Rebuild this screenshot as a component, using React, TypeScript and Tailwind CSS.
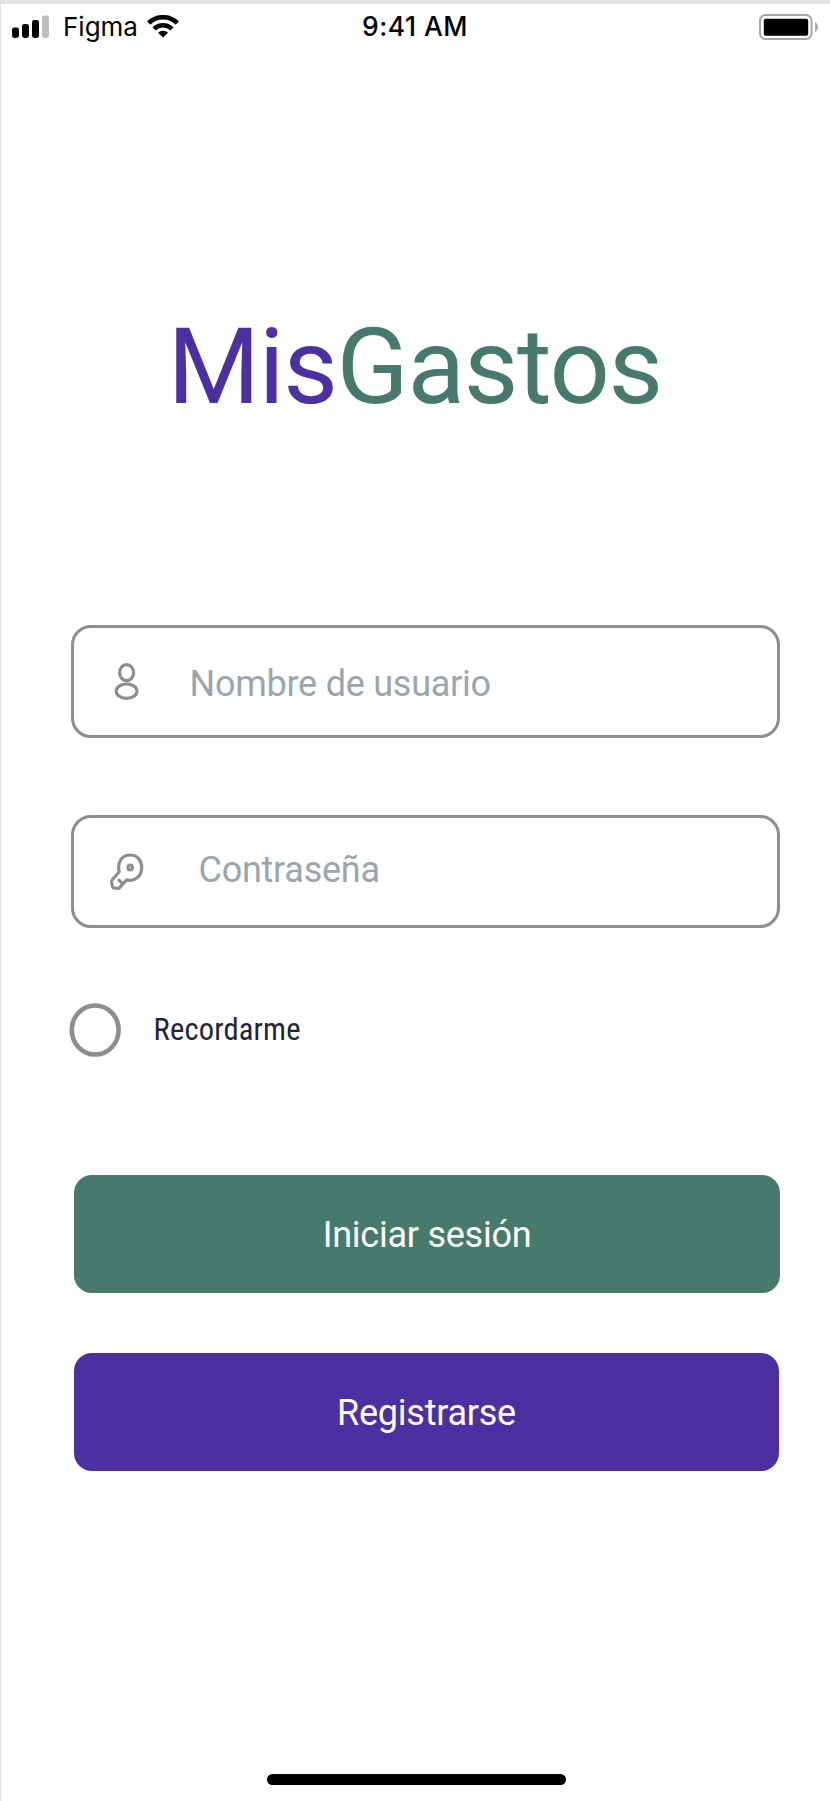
import type { ReactNode } from "react";

function SignalIcon() {
  return (
    <svg width="38" height="24" viewBox="0 0 38 24" className="shrink-0">
      <rect x="0" y="12.5" width="7" height="10.5" rx="2.4" fill="#000" />
      <rect x="10" y="9" width="7" height="14" rx="2.4" fill="#000" />
      <rect x="20" y="5" width="7" height="18" rx="2.4" fill="#000" />
      <rect x="30" y="0.5" width="7" height="22.5" rx="2.4" fill="#bfbfbf" />
    </svg>
  );
}

function WifiIcon() {
  return (
    <svg width="32" height="23" viewBox="0 0 32 23" className="shrink-0">
      <g fill="none" stroke="#000" strokeWidth="4.6">
        <path d="M1.7 8 A20.6 20.6 0 0 1 30.3 8" />
        <path d="M7 13.9 A13 13 0 0 1 25 13.9" />
      </g>
      <path d="M16 22.6 L11 17.8 A7 7 0 0 1 21 17.8 Z" fill="#000" />
    </svg>
  );
}

function BatteryIcon() {
  return (
    <svg width="60" height="26" viewBox="0 0 60 26" className="shrink-0">
      <rect x="1" y="1" width="51.5" height="24" rx="5.5" fill="none" stroke="#a6a6a6" strokeWidth="2" />
      <rect x="4.8" y="4.8" width="44.4" height="17" rx="2" fill="#000" />
      <path d="M56 8 C60 10 60 16 56 18 Z" fill="#a6a6a6" />
    </svg>
  );
}

function UserIcon() {
  return (
    <svg width="26" height="38" viewBox="0 0 26 38" fill="none" stroke="#8e8e8e" strokeWidth="3.2">
      <ellipse cx="12.6" cy="9.7" rx="7" ry="8" />
      <ellipse cx="12.6" cy="28.2" rx="10.4" ry="7.2" />
    </svg>
  );
}

function KeyIcon() {
  return (
    <svg
      width="34"
      height="38"
      viewBox="0 0 34 38"
      fill="none"
      stroke="#8e8e8e"
      strokeWidth="3.2"
      strokeLinecap="round"
      strokeLinejoin="round"
    >
      <path d="M9.2 18.7 C7 9 12 2 20.4 2 C27 2 31.7 7.5 31.7 14.5 C31.7 23.5 24.5 28.9 16.6 26.9 L9.6 34.6 C9 35.3 8.3 35.5 7.5 35.4 L4.1 35 C3.1 34.9 2.5 34.2 2.4 33.2 L1.6 29.2 C1.5 28.3 1.7 27.4 2.3 26.7 Z" />
      <path d="M9 27.2 L12.4 30.6" />
      <ellipse cx="20.2" cy="14.5" rx="2.2" ry="2.5" />
    </svg>
  );
}

function RadioIcon() {
  return (
    <svg width="52" height="54" viewBox="0 0 52 54" fill="none" className="shrink-0">
      <ellipse cx="26.2" cy="27" rx="23.4" ry="24.5" stroke="#8e8e8e" strokeWidth="4.6" />
    </svg>
  );
}

function Field({ icon, children }: { icon: ReactNode; children: ReactNode }) {
  return (
    <div className="flex h-[113px] w-[709px] items-center rounded-[20px] border-[3px] border-[#8e8e8e] text-[36px] leading-[42px] tracking-[-0.25px] text-[#9ba5ae]">
      {icon}
      {children}
    </div>
  );
}

export default function App() {
  return (
    <main className="flex h-[1801px] w-[830px] flex-col border-t-4 border-l border-[#e3e3e3] bg-white font-['Roboto',sans-serif]">
      <header className="flex h-[46px] items-start font-['Inter',sans-serif] text-[26px] leading-[32px] text-black">
        <div className="flex w-[361px] items-start pl-[11px]">
          <div className="pt-[11px]"><SignalIcon /></div>
          <span className="ml-[13px] pt-[7px]">Figma</span>
          <div className="ml-[9px] pt-[11px]"><WifiIcon /></div>
        </div>
        <span className="w-[120px] pt-[6px] text-[26.5px] font-medium tracking-[0.5px] whitespace-nowrap">9:41 AM</span>
        <div className="ml-auto pt-[10px] pr-[11px]"><BatteryIcon /></div>
      </header>

      <h1 className="mt-[257px] pl-[166.6px] text-[106px] leading-[120px] tracking-[-1.35px] whitespace-nowrap text-[#4c30a2]">
        Mis<span className="text-[#47796c]">Gastos</span>
      </h1>

      <form className="mt-[198px] flex flex-col pl-[70px]">
        <Field
          icon={<div className="w-[115.5px] pt-[1px] pl-[40px]"><UserIcon /></div>}
        >
          <span className="pt-[5px]">Nombre de usuario</span>
        </Field>
        <div className="mt-[77px]">
          <Field
            icon={<div className="w-[124.5px] pl-[36px]"><KeyIcon /></div>}
          >
            <span className="pb-[4px]">Contraseña</span>
          </Field>
        </div>

        <label className="mt-[75px] -ml-[2px] flex items-center">
          <RadioIcon />
          <span className="ml-[32.5px] text-[30.5px] leading-[36px] tracking-[0.2px] text-[#1f2533] [font-family:'Roboto_Condensed','Roboto',sans-serif] [font-stretch:75%]">
            Recordarme
          </span>
        </label>

        <button type="button" className="mt-[118px] ml-[3px] h-[118px] w-[706px] rounded-[18px] bg-[#47796c] pt-[2px] text-[36px] tracking-[-0.25px] text-white">
          Iniciar sesión
        </button>
        <button type="button" className="mt-[60px] ml-[3px] h-[118px] w-[705px] rounded-[18px] bg-[#4c30a2] pt-[2px] text-[36px] tracking-[-0.25px] text-white">
          Registrarse
        </button>
      </form>

      <div className="mt-[303px] ml-[266px] h-[11px] w-[299px] rounded-full bg-black" />
    </main>
  );
}
